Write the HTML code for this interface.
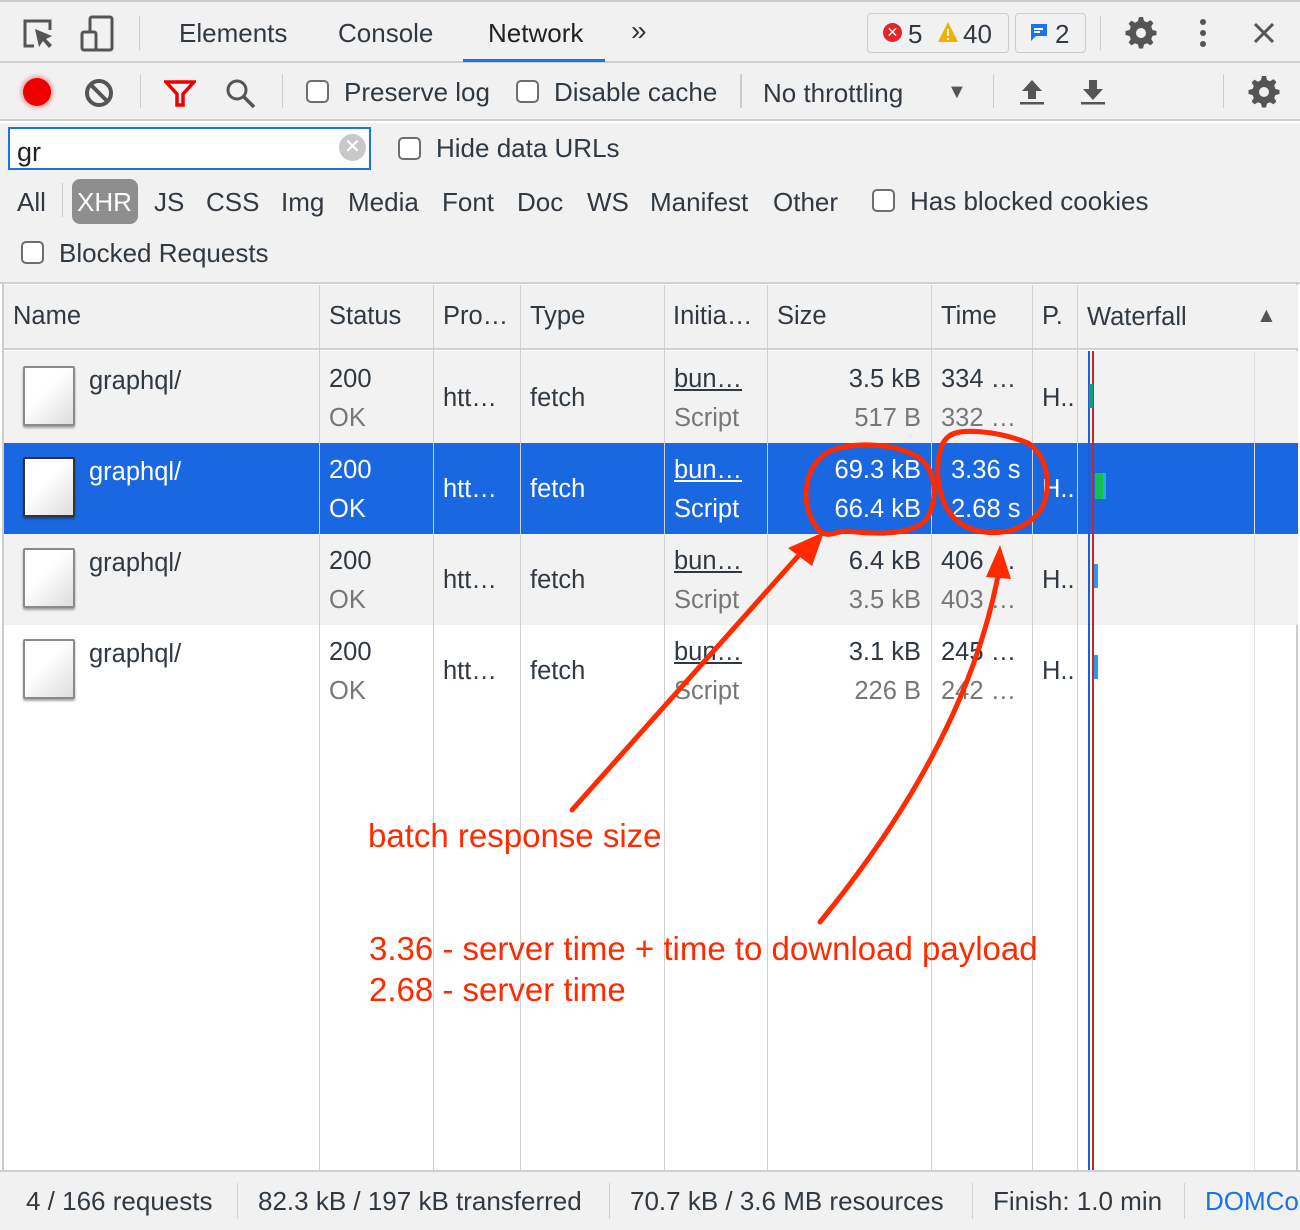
<!DOCTYPE html>
<html><head><meta charset="utf-8"><style>
*{margin:0;padding:0;box-sizing:border-box}
body{width:1300px;height:1230px;position:relative;overflow:hidden;background:#fff;font-family:"Liberation Sans",Arial,sans-serif;color:#303942;font-size:25.5px}
.a{position:absolute;white-space:nowrap;line-height:1}
.g{color:#777}
.bar{position:absolute;left:0;width:1300px;background:#f1f1f1}
.vl{position:absolute;width:1px;background:#d0d0d0}
.cb{position:absolute;width:23px;height:23px;border:2px solid #6e6e6e;border-radius:5px;background:#fff}
.doc{position:absolute;width:52px;height:60px;border:2px solid #8a8a8a;border-radius:2px;background:linear-gradient(135deg,#fff 40%,#ddd);box-shadow:0 2px 2px rgba(0,0,0,.35)}
.w{color:#fff}
.u{text-decoration:underline}
.red{color:#ff2a00;font-size:33px}
.t{font-size:26px}
</style></head><body>
<svg width="0" height="0" style="position:absolute"><defs><g id="gear"><path d="M15 1h4l1 4 3 1.3 3.5-2.2 2.9 2.9-2.2 3.5L28.5 14l4 1v4l-4 1-1.3 3 2.2 3.5-2.9 2.9-3.5-2.2-3 1.3-1 4h-4l-1-4-3-1.3-3.5 2.2-2.9-2.9 2.2-3.5L5.5 20l-4-1v-4l4-1 1.3-3-2.2-3.5 2.9-2.9 3.5 2.2L14 5z" fill="#555"/><circle cx="17" cy="17" r="5" fill="#f1f1f1"/></g></defs></svg>
<!-- top bar -->
<div class="bar" style="top:0;height:63px;border-bottom:2px solid #cfcfcf;border-top:2px solid #ccc"></div>
<svg class="a" style="left:20px;top:16px" width="40" height="36" viewBox="0 0 40 36"><path d="M14 30H5V5h25v9" fill="none" stroke="#555" stroke-width="3"/><path d="M15 13l4 18 4-6 6 7 3-3-6-6 6-3z" fill="#555"/></svg>
<svg class="a" style="left:78px;top:14px" width="40" height="40"><rect x="12" y="3" width="22" height="33" rx="2" fill="none" stroke="#555" stroke-width="3"/><rect x="4" y="18" width="14" height="18" rx="2" fill="#f1f1f1" stroke="#555" stroke-width="3"/></svg>
<div class="vl" style="left:139px;top:16px;height:34px;background:#ccc"></div>
<div class="a t" style="left:179px;top:20px">Elements</div>
<div class="a t" style="left:338px;top:20px">Console</div>
<div class="a t" style="left:488px;top:20px;color:#222">Network</div>
<div class="a" style="left:463px;top:59px;width:142px;height:3px;background:#1a73e8"></div>
<div class="a" style="left:631px;top:17px;font-size:28px">»</div>
<div class="a" style="left:867px;top:13px;width:142px;height:40px;border:1px solid #ccc;border-radius:4px"></div>
<div class="a" style="left:883px;top:23px;width:19px;height:19px;border-radius:50%;background:#e2262c;color:#fff;font-size:14px;text-align:center;line-height:19px">✕</div>
<div class="a t" style="left:908px;top:21px">5</div>
<svg class="a" style="left:937px;top:21px" width="22" height="22"><path d="M11 1L21 21H1z" fill="#f1b100"/><rect x="10" y="8" width="2" height="7" fill="#fff"/><rect x="10" y="17" width="2" height="2" fill="#fff"/></svg>
<div class="a t" style="left:963px;top:21px">40</div>
<div class="a" style="left:1015px;top:13px;width:71px;height:40px;border:1px solid #ccc;border-radius:4px"></div>
<svg class="a" style="left:1030px;top:23px" width="18" height="20"><path d="M1 1h16v12H6l-5 5z" fill="#1a73e8"/><rect x="4" y="5" width="9" height="2" fill="#fff"/><rect x="4" y="8" width="6" height="2" fill="#fff"/></svg>
<div class="a t" style="left:1055px;top:21px">2</div>
<div class="vl" style="left:1100px;top:16px;height:34px;background:#ccc"></div>
<svg class="a" style="left:1124px;top:16px" width="34" height="34"><use href="#gear"/></svg>
<svg class="a" style="left:1196px;top:18px" width="14" height="32"><circle cx="7" cy="4" r="3" fill="#555"/><circle cx="7" cy="15" r="3" fill="#555"/><circle cx="7" cy="26" r="3" fill="#555"/></svg>
<svg class="a" style="left:1252px;top:21px" width="24" height="24"><path d="M3 3l18 18M21 3L3 21" stroke="#555" stroke-width="3"/></svg>
<!-- toolbar -->
<div class="bar" style="top:63px;height:58px;border-bottom:2px solid #cfcfcf"></div>
<div class="a" style="left:23px;top:78px;width:28px;height:28px;border-radius:50%;background:#e00;box-shadow:0 0 4px 2px rgba(230,0,0,.35)"></div>
<svg class="a" style="left:84px;top:78px" width="30" height="30"><circle cx="15" cy="15" r="12" fill="none" stroke="#555" stroke-width="4"/><path d="M7 7l16 16" stroke="#555" stroke-width="4"/></svg>
<div class="vl" style="left:140px;top:74px;height:34px;background:#ccc"></div>
<svg class="a" style="left:164px;top:80px" width="32" height="28"><path d="M2 2h28L19 14v11h-6V14z" fill="none" stroke="#e00" stroke-width="3.5"/></svg>
<svg class="a" style="left:225px;top:78px" width="32" height="32"><circle cx="12" cy="12" r="9" fill="none" stroke="#555" stroke-width="3"/><path d="M19 19l10 10" stroke="#555" stroke-width="3.5"/></svg>
<div class="vl" style="left:282px;top:74px;height:34px;background:#ccc"></div>
<div class="cb" style="left:306px;top:80px"></div>
<div class="a t" style="left:344px;top:79px">Preserve log</div>
<div class="cb" style="left:516px;top:80px"></div>
<div class="a t" style="left:554px;top:79px">Disable cache</div>
<div class="vl" style="left:740px;top:74px;height:34px;background:#ccc;width:2px"></div>
<div class="a t" style="left:763px;top:80px">No throttling</div>
<div class="a" style="left:947px;top:82px;font-size:20px;color:#555">▼</div>
<div class="vl" style="left:993px;top:74px;height:34px;background:#ccc"></div>
<svg class="a" style="left:1019px;top:78px" width="26" height="28"><path d="M13 2L3 13h6v8h8v-8h6z" fill="#555"/><rect x="1" y="24" width="24" height="2.5" fill="#555"/></svg>
<svg class="a" style="left:1080px;top:78px" width="26" height="28"><path d="M13 22L3 11h6V2h8v9h6z" fill="#555"/><rect x="1" y="24" width="24" height="2.5" fill="#555"/></svg>
<div class="vl" style="left:1223px;top:74px;height:34px;background:#ccc"></div>
<svg class="a" style="left:1247px;top:75px" width="34" height="34"><use href="#gear"/></svg>
<!-- filter area -->
<div class="bar" style="top:123px;height:161px;border-bottom:2px solid #cfcfcf"></div>
<div class="a" style="left:8px;top:127px;width:363px;height:43px;border:2px solid #1a73e8;background:#fff"></div>
<div class="a" style="left:17px;top:139px;font-size:27px;color:#222">gr</div>
<div class="a" style="left:339px;top:134px;width:27px;height:27px;border-radius:50%;background:#c8c8c8;color:#fff;font-size:20px;text-align:center;line-height:27px">✕</div>
<div class="cb" style="left:398px;top:137px"></div>
<div class="a t" style="left:436px;top:135px">Hide data URLs</div>
<div class="a t" style="left:17px;top:189px">All</div>
<div class="vl" style="left:62px;top:183px;height:34px;background:#ccc"></div>
<div class="a" style="left:72px;top:179px;width:66px;height:45px;background:#8e8e8e;border-radius:8px"></div>
<div class="a t" style="left:77px;top:189px;color:#fff">XHR</div>
<div class="a t" style="left:154px;top:189px">JS</div>
<div class="a t" style="left:206px;top:189px">CSS</div>
<div class="a t" style="left:281px;top:189px">Img</div>
<div class="a t" style="left:348px;top:189px">Media</div>
<div class="a t" style="left:442px;top:189px">Font</div>
<div class="a t" style="left:517px;top:189px">Doc</div>
<div class="a t" style="left:587px;top:189px">WS</div>
<div class="a t" style="left:650px;top:189px">Manifest</div>
<div class="a t" style="left:773px;top:189px">Other</div>
<div class="cb" style="left:872px;top:189px"></div>
<div class="a t" style="left:910px;top:188px">Has blocked cookies</div>
<div class="cb" style="left:21px;top:241px"></div>
<div class="a t" style="left:59px;top:240px">Blocked Requests</div>
<!-- table -->
<div class="a" style="left:2px;top:284px;width:1296px;height:886px;border-left:2px solid #ccc;border-right:2px solid #ccc;background:#fff"></div>
<div class="a" style="left:4px;top:285px;width:1294px;height:65px;background:#f1f1f1;border-bottom:2px solid #d0d0d0"></div>
<div class="a" style="left:4px;top:351px;width:1294px;height:92px;background:#f2f2f2"></div>
<div class="a" style="left:4px;top:443px;width:1294px;height:91px;background:#1a67e2"></div>
<div class="a" style="left:4px;top:534px;width:1294px;height:91px;background:#f2f2f2"></div>
<div class="vl" style="left:319px;top:285px;height:885px"></div>
<div class="vl" style="left:433px;top:285px;height:885px"></div>
<div class="vl" style="left:520px;top:285px;height:885px"></div>
<div class="vl" style="left:664px;top:285px;height:885px"></div>
<div class="vl" style="left:767px;top:285px;height:885px"></div>
<div class="vl" style="left:931px;top:285px;height:885px"></div>
<div class="vl" style="left:1032px;top:285px;height:885px"></div>
<div class="vl" style="left:1077px;top:285px;height:885px"></div>
<div class="vl" style="left:1254px;top:351px;height:819px;background:#e0e0e0"></div>
<div class="a" style="left:13px;top:304px">Name</div>
<div class="a" style="left:329px;top:304px">Status</div>
<div class="a" style="left:443px;top:304px">Pro…</div>
<div class="a" style="left:530px;top:304px">Type</div>
<div class="a" style="left:673px;top:304px">Initia…</div>
<div class="a" style="left:777px;top:304px">Size</div>
<div class="a" style="left:941px;top:304px">Time</div>
<div class="a" style="left:1042px;top:304px">P.</div>
<div class="a" style="left:1087px;top:305px">Waterfall</div>
<div class="a" style="left:1256px;top:305px;font-size:21px;color:#555">▲</div>
<!-- waterfall lines -->
<div class="a" style="left:1088px;top:351px;width:2px;height:819px;background:#1a5fe0"></div>
<div class="a" style="left:1092px;top:351px;width:2px;height:819px;background:#c62828"></div>
<div class="a" style="left:1089px;top:384px;width:4px;height:24px;background:#159a7a"></div>
<div class="a" style="left:1095px;top:473px;width:8px;height:26px;background:#14c050"></div>
<div class="a" style="left:1103px;top:473px;width:3px;height:26px;background:#2aa8e8"></div>
<div class="a" style="left:1094px;top:564px;width:4px;height:24px;background:#2a9ae8"></div>
<div class="a" style="left:1094px;top:655px;width:4px;height:24px;background:#2a9ae8"></div>
<!-- rows -->
<div class="doc" style="left:23px;top:366px"></div>
<div class="a" style="left:89px;top:369px">graphql/</div>
<div class="a" style="left:329px;top:367px">200</div><div class="a g" style="left:329px;top:406px">OK</div>
<div class="a" style="left:443px;top:386px">htt…</div>
<div class="a" style="left:530px;top:386px">fetch</div>
<div class="a u" style="left:674px;top:367px">bun…</div><div class="a g" style="left:674px;top:406px">Script</div>
<div class="a" style="right:379px;top:367px">3.5 kB</div><div class="a g" style="right:379px;top:406px">517 B</div>
<div class="a" style="left:941px;top:367px">334 …</div><div class="a g" style="left:941px;top:406px">332 …</div>
<div class="a" style="left:1042px;top:386px">H..</div>

<div class="doc" style="left:23px;top:457px;border-color:#333"></div>
<div class="a w" style="left:89px;top:460px">graphql/</div>
<div class="a w" style="left:329px;top:458px">200</div><div class="a w" style="left:329px;top:497px">OK</div>
<div class="a w" style="left:443px;top:477px">htt…</div>
<div class="a w" style="left:530px;top:477px">fetch</div>
<div class="a w u" style="left:674px;top:458px">bun…</div><div class="a w" style="left:674px;top:497px">Script</div>
<div class="a w" style="right:379px;top:458px">69.3 kB</div><div class="a w" style="right:379px;top:497px">66.4 kB</div>
<div class="a w" style="left:951px;top:458px">3.36 s</div><div class="a w" style="left:951px;top:497px">2.68 s</div>
<div class="a w" style="left:1042px;top:477px">H..</div>

<div class="doc" style="left:23px;top:548px"></div>
<div class="a" style="left:89px;top:551px">graphql/</div>
<div class="a" style="left:329px;top:549px">200</div><div class="a g" style="left:329px;top:588px">OK</div>
<div class="a" style="left:443px;top:568px">htt…</div>
<div class="a" style="left:530px;top:568px">fetch</div>
<div class="a u" style="left:674px;top:549px">bun…</div><div class="a g" style="left:674px;top:588px">Script</div>
<div class="a" style="right:379px;top:549px">6.4 kB</div><div class="a g" style="right:379px;top:588px">3.5 kB</div>
<div class="a" style="left:941px;top:549px">406 …</div><div class="a g" style="left:941px;top:588px">403 …</div>
<div class="a" style="left:1042px;top:568px">H..</div>

<div class="doc" style="left:23px;top:639px"></div>
<div class="a" style="left:89px;top:642px">graphql/</div>
<div class="a" style="left:329px;top:640px">200</div><div class="a g" style="left:329px;top:679px">OK</div>
<div class="a" style="left:443px;top:659px">htt…</div>
<div class="a" style="left:530px;top:659px">fetch</div>
<div class="a u" style="left:674px;top:640px">bun…</div><div class="a g" style="left:674px;top:679px">Script</div>
<div class="a" style="right:379px;top:640px">3.1 kB</div><div class="a g" style="right:379px;top:679px">226 B</div>
<div class="a" style="left:941px;top:640px">245 …</div><div class="a g" style="left:941px;top:679px">242 …</div>
<div class="a" style="left:1042px;top:659px">H..</div>
<!-- footer -->
<div class="bar" style="top:1170px;height:60px;border-top:2px solid #cfcfcf"></div>
<div class="a t" style="left:26px;top:1188px">4 / 166 requests</div>
<div class="vl" style="left:237px;top:1183px;height:36px"></div>
<div class="a t" style="left:258px;top:1188px">82.3 kB / 197 kB transferred</div>
<div class="vl" style="left:609px;top:1183px;height:36px"></div>
<div class="a t" style="left:630px;top:1188px">70.7 kB / 3.6 MB resources</div>
<div class="vl" style="left:972px;top:1183px;height:36px"></div>
<div class="a t" style="left:993px;top:1188px">Finish: 1.0 min</div>
<div class="vl" style="left:1184px;top:1183px;height:36px"></div>
<div class="a t" style="left:1205px;top:1188px;color:#1a73e8">DOMCo</div>
<!-- annotations -->
<svg class="a" style="left:0;top:0" width="1300" height="1230">
<g fill="none" stroke="#ff2a00" stroke-width="5" stroke-linecap="round">
<path d="M830 451c20-8 60-10 88 6 18 12 20 40 10 60-12 18-50 18-80 14-10-1-20 8-28 0-20-20-20-64 10-80z"/>
<path d="M948 437c10-10 50-6 80 6 22 14 24 50 12 68-18 24-56 28-80 12-20-14-28-50-18-78 4-8 8-10 14-12"/>
<path d="M572 810L808 545"/>
<path d="M820 922C920 800 980 680 1000 565"/>
</g>
<path d="M824 532l-36 16 24 18z" fill="#ff2a00"/>
<path d="M1000 545l-14 32 25 2z" fill="#ff2a00"/>
</svg>
<div class="a red" style="left:368px;top:819px">batch response size</div>
<div class="a red" style="left:369px;top:932px">3.36 - server time + time to download payload</div>
<div class="a red" style="left:369px;top:973px">2.68 - server time</div>
</body></html>
